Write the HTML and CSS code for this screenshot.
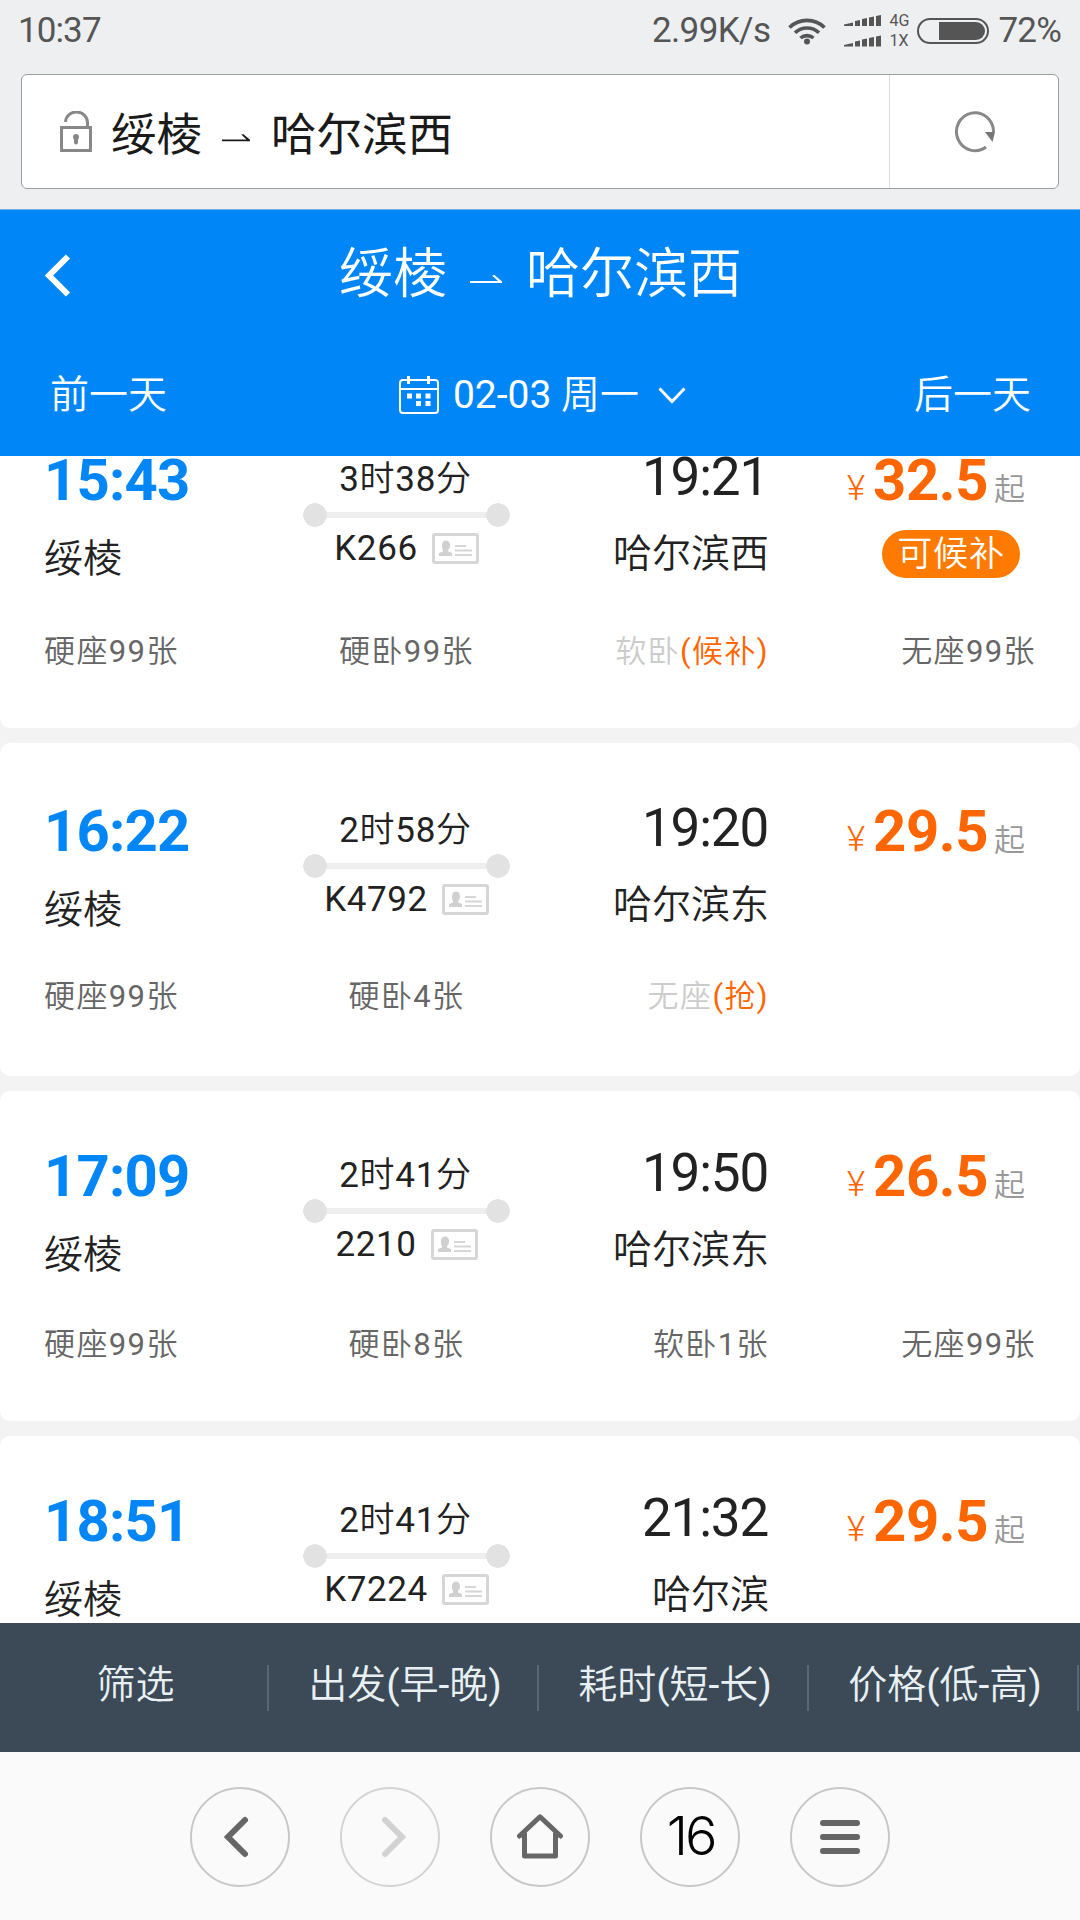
FILE: index.html
```
<!DOCTYPE html>
<html lang="zh-CN">
<head>
  <meta charset="UTF-8">
  <title>绥棱 ⇀ 哈尔滨西</title>
  <link rel="stylesheet" href="styles.css">
</head>
<body>
  <!-- shared icons -->
  <svg class="sprite">
    <symbol id="arrow" viewBox="0 0 32 10">
      <path d="M0 6h28L22 0.5L24.5 0L32 6.5V8H0z" fill="currentColor"/>
    </symbol>
    <symbol id="idcard" viewBox="0 0 47 31">
      <rect x="1.5" y="1.5" width="44" height="28" rx="1.5" fill="none" stroke="#d6d6d6" stroke-width="3"/>
      <path d="M10 12a4 4.5 0 0 1 8 0c0 3-1 4-2 5v1.500l4 1.500v3H7v-3l4-1.500V17c-.7-1-1-2-1-5z" fill="#d0d0d0"/>
      <path d="M23 13h11M23 17.500h17M23 22h17" stroke="#d6d6d6" stroke-width="2"/>
    </symbol>
  </svg>

  <div class="status">
    <span class="clock">10:37</span>
    <span class="speed">2.99K/s</span>
    <svg class="wifi" width="38" height="28" viewBox="0 0 38 28" fill="none" stroke="#555" stroke-width="3.600">
      <path d="M1.500 10.500a25 25 0 0 1 35 0M7 15.800a17.500 17.500 0 0 1 24 0M12.500 21a10 10 0 0 1 13 0"/>
      <circle cx="19" cy="24.500" r="3" fill="#555" stroke="none"/>
    </svg>
    <svg class="signal" width="37" height="32" viewBox="0 0 37 32" fill="#555">
      <path d="M0 11V9.500l9-2V11zM11 11V6l5-1v6zM18 11V4l5-1v8zM25 11V2.500l5-1V11zM32 11V1l5-1v11z"/>
      <path d="M0 31.500V30l9-2v3.500zM11 31.500v-5l5-1v6zM18 31.500v-7l5-1v8zM25 31.500V23l5-1v9.500zM32 31.500v-10l5-1v11z"/>
    </svg>
    <span class="net"><span>4G</span><span>1X</span></span>
    <svg class="battery" width="72" height="26" viewBox="0 0 72 26">
      <rect x="1" y="1" width="70" height="24" rx="12" fill="none" stroke="#555" stroke-width="2"/>
      <path d="M22 4h37a9 9 0 0 1 0 18H22z" fill="#555"/>
    </svg>
    <span class="percent">72%</span>
  </div>

  <div class="address">
    <div class="address-title">
      <svg width="32" height="41" viewBox="0 0 32 41" fill="none" stroke="#888" stroke-width="3">
        <rect x="1.500" y="16.500" width="29" height="23"/>
        <path d="M5.500 11a11 10.500 0 0 1 22 1v4"/>
        <path d="M16 27v4.500" stroke-width="4" stroke-linecap="round"/>
        <circle cx="16" cy="26" r="3" fill="#888" stroke="none"/>
      </svg>
      <span>绥棱</span>
      <svg class="arrow"><use href="#arrow"/></svg>
      <span>哈尔滨西</span>
    </div>
    <div class="reload">
      <svg width="42" height="42" viewBox="0 0 42 42">
        <path d="M32 36A18.500 19 0 1 1 39.500 21" fill="none" stroke="#888" stroke-width="3"/>
        <path d="M31 21h10l-2.500 10z" fill="#777"/>
      </svg>
    </div>
  </div>

  <div class="header">
    <div class="header-title">
      <svg class="back" width="26" height="43" viewBox="0 0 26 43" fill="none" stroke="#fff" stroke-width="6">
        <path d="M23 2.500L4 21.500L23 40.500"/>
      </svg>
      <span>绥棱</span>
      <svg class="arrow"><use href="#arrow"/></svg>
      <span>哈尔滨西</span>
    </div>
    <div class="dates">
      <span class="prev">前一天</span>
      <span class="today">
        <svg width="40" height="38" viewBox="0 0 40 38" fill="none" stroke="#fff" stroke-width="2">
          <rect x="1" y="4" width="38" height="33" rx="3"/>
          <path d="M1 13h38"/>
          <path d="M9.500 0v8M29.500 0v8" stroke-width="3"/>
          <path d="M8 20h5M17 20h5M26.500 20h5M17 27.500h5M26.500 27.500h5" stroke-width="5"/>
        </svg>
        <span>02-03 周一</span>
        <svg class="down" width="28" height="17" viewBox="0 0 28 17" fill="none" stroke="#fff" stroke-width="3">
          <path d="M1.500 1.500L14 14.500L26.500 1.500"/>
        </svg>
      </span>
      <span class="next">后一天</span>
    </div>
  </div>

  <div class="list">
    <div class="trip trip-first">
      <div class="trip-main">
        <div class="from"><b>15:43</b><span>绥棱</span></div>
        <div class="train">
          <span class="duration">3时38分</span>
          <div class="line"></div>
          <span class="number">K266 <svg class="idcard"><use href="#idcard"/></svg></span>
        </div>
        <div class="to"><b>19:21</b><span>哈尔滨西</span></div>
        <div class="price">
          <div><i>¥</i><b>32.5</b><small>起</small></div>
          <span class="badge">可候补</span>
        </div>
      </div>
      <div class="seats">
        <span>硬座99张</span>
        <span>硬卧99张</span>
        <span class="none">软卧<em>(候补)</em></span>
        <span>无座99张</span>
      </div>
    </div>

    <div class="trip trip-short">
      <div class="trip-main">
        <div class="from"><b>16:22</b><span>绥棱</span></div>
        <div class="train">
          <span class="duration">2时58分</span>
          <div class="line"></div>
          <span class="number">K4792 <svg class="idcard"><use href="#idcard"/></svg></span>
        </div>
        <div class="to"><b>19:20</b><span>哈尔滨东</span></div>
        <div class="price">
          <div><i>¥</i><b>29.5</b><small>起</small></div>
        </div>
      </div>
      <div class="seats">
        <span>硬座99张</span>
        <span>硬卧4张</span>
        <span class="none">无座<em>(抢)</em></span>
      </div>
    </div>

    <div class="trip">
      <div class="trip-main">
        <div class="from"><b>17:09</b><span>绥棱</span></div>
        <div class="train">
          <span class="duration">2时41分</span>
          <div class="line"></div>
          <span class="number">2210 <svg class="idcard"><use href="#idcard"/></svg></span>
        </div>
        <div class="to"><b>19:50</b><span>哈尔滨东</span></div>
        <div class="price">
          <div><i>¥</i><b>26.5</b><small>起</small></div>
        </div>
      </div>
      <div class="seats">
        <span>硬座99张</span>
        <span>硬卧8张</span>
        <span>软卧1张</span>
        <span>无座99张</span>
      </div>
    </div>

    <div class="trip">
      <div class="trip-main">
        <div class="from"><b>18:51</b><span>绥棱</span></div>
        <div class="train">
          <span class="duration">2时41分</span>
          <div class="line"></div>
          <span class="number">K7224 <svg class="idcard"><use href="#idcard"/></svg></span>
        </div>
        <div class="to"><b>21:32</b><span>哈尔滨</span></div>
        <div class="price">
          <div><i>¥</i><b>29.5</b><small>起</small></div>
        </div>
      </div>
    </div>
  </div>

  <div class="filters">
    <span>筛选</span>
    <span>出发(早-晚)</span>
    <span>耗时(短-长)</span>
    <span>价格(低-高)</span>
  </div>

  <div class="toolbar">
    <div class="tool">
      <svg width="40" height="44" viewBox="0 0 40 44" fill="none" stroke="#666" stroke-width="6" stroke-linecap="round">
        <path d="M25 5L8 22L25 39"/>
      </svg>
    </div>
    <div class="tool disabled">
      <svg width="40" height="44" viewBox="0 0 40 44" fill="none" stroke="#d2d2d2" stroke-width="6" stroke-linecap="round">
        <path d="M15 5L32 22L15 39"/>
      </svg>
    </div>
    <div class="tool">
      <svg width="48" height="46" viewBox="0 0 48 46" fill="none" stroke="#666" stroke-width="5" stroke-linecap="round" stroke-linejoin="round">
        <path d="M3.500 22L24 2.800L44.500 22M8.500 20v22h31V20"/>
      </svg>
    </div>
    <div class="tool count">16</div>
    <div class="tool">
      <svg width="40" height="34" viewBox="0 0 40 34" stroke="#666" stroke-width="6" stroke-linecap="round">
        <path d="M3 3h34M3 17h34M3 31h34"/>
      </svg>
    </div>
  </div>
</body>
</html>
```
FILE: styles.css
```
* {
  box-sizing: border-box;
}
body {
  margin: 0;
  width: 1080px;
  height: 1920px;
  overflow: hidden;
  display: flex;
  flex-direction: column;
  background: #eeeff1;
  color: #222;
  font-family: Roboto, "Noto Sans CJK SC DemiLight", "Noto Sans CJK SC", sans-serif;
}
svg {
  display: block;
  flex: none;
}
b, i, em {
  font-weight: normal;
  font-style: normal;
}
.sprite {
  display: none;
}

/* status bar */
.status {
  height: 74px;
  padding: 0 19px 13px 18px;
  display: flex;
  align-items: center;
  color: #555;
  font-size: 35px;
  line-height: 62px;
}
.clock {
  letter-spacing: -0.9px;
}
.speed {
  margin-left: auto;
  letter-spacing: -0.6px;
}
.wifi {
  margin-left: 18px;
}
.signal {
  margin-left: 18px;
}
.net {
  width: 25px;
  margin: 0 3px 0 8px;
  display: flex;
  flex-direction: column;
  font-size: 16px;
  line-height: 20px;
}
.percent {
  margin-left: 9px;
  letter-spacing: -0.8px;
}

/* address bar */
.address {
  height: 115px;
  margin: 0 21px 20px;
  display: flex;
  background: #fff;
  border: 1px solid #9c9fa0;
  border-radius: 6px;
}
.address-title {
  flex: 1;
  display: flex;
  align-items: center;
  padding-left: 38px;
  font-family: "Noto Sans CJK SC", sans-serif;
  font-size: 45.5px;
  line-height: 109px;
  color: #1a1a1a;
}
.address-title span {
  margin-left: 19px;
}
.address-title .arrow {
  width: 28px;
  height: 9px;
  margin: 14px 2px 0 20px;
}
.reload {
  width: 169px;
  padding-left: 2px;
  border-left: 1px solid #ddd;
  display: flex;
  align-items: center;
  justify-content: center;
}

/* blue header */
.header {
  height: 247px;
  border-top: 1px solid #6fb3e8;
  background: #0086f6;
  color: #fff;
}
.header-title {
  height: 125px;
  display: flex;
  align-items: center;
  font-size: 54px;
  line-height: 125px;
}
.header-title span {
  padding-top: 3px;
}
.header-title .back {
  margin: 6px 268px 0 45px;
}
.header-title .arrow {
  width: 32px;
  height: 10px;
  margin: 14px 24px 0 23px;
}
.dates {
  height: 120px;
  padding: 0 49px 0 50px;
  display: flex;
  align-items: center;
  justify-content: space-between;
  font-size: 39px;
  line-height: 120px;
}
.today {
  display: flex;
  align-items: center;
  padding-left: 4px;
}
.today svg {
  margin-right: 14px;
}
.today .down {
  margin: 0 0 0 19px;
}

/* train list */
.list {
  height: 1167px;
  overflow: hidden;
  background: #f3f3f3;
}
.trip {
  height: 330px;
  margin-bottom: 15px;
  padding: 45px 44px 0;
  background: #fff;
  border-radius: 10px;
}
.trip-first {
  height: 336px;
  margin-top: -64px;
  padding-top: 48px;
}
.trip-short {
  height: 333px;
  padding-top: 48px;
}
.trip-main,
.seats {
  display: grid;
  grid-template-columns: 259px 207px 259px 267px;
}
.trip-main {
  height: 189px;
}
.trip-first .trip-main {
  height: 192px;
}
.trip-short .trip-main {
  height: 186px;
}
.from,
.to,
.train {
  display: flex;
  flex-direction: column;
}
.from b {
  font-size: 58px;
  font-weight: bold;
  line-height: 80px;
  letter-spacing: -0.8px;
  color: #0086f6;
}
.from span {
  font-size: 39px;
  line-height: 78px;
}
.train {
  align-items: center;
  padding-top: 15px;
  font-size: 35px;
}
.duration {
  padding-top: 1px;
  margin: 0 2px -1px 0;
  line-height: 48px;
  letter-spacing: 0.7px;
}
.line {
  width: 100%;
  height: 24px;
  background:
    radial-gradient(circle at 12px 12px, #e2e2e2 11.5px, transparent 12px),
    radial-gradient(circle at 195px 12px, #e2e2e2 11.5px, transparent 12px),
    linear-gradient(#eee, #eee) center / 183px 6px no-repeat;
}
.number {
  display: flex;
  align-items: center;
  gap: 14px;
  line-height: 43px;
  letter-spacing: 0.6px;
}
.idcard {
  width: 47px;
  height: 31px;
}
.to {
  align-items: flex-end;
}
.to b {
  margin-right: 1px;
  font-size: 53px;
  line-height: 74px;
  letter-spacing: -1.2px;
}
.to span {
  font-size: 39px;
  line-height: 80px;
}
.price {
  padding-left: 77px;
}
.price div {
  height: 80px;
  display: flex;
  align-items: baseline;
  line-height: 80px;
  color: #ff6600;
}
.price i {
  width: 27px;
  padding-left: 1px;
  font-size: 35px;
  font-weight: 300;
}
.price b {
  font-size: 58px;
  font-weight: bold;
  letter-spacing: -0.4px;
}
.price small {
  margin-left: 6px;
  font-size: 31px;
  color: #999;
}
.badge {
  display: block;
  width: 138px;
  height: 48px;
  margin: 10px 0 0 36px;
  border-radius: 24px;
  background: #ff7a00;
  color: #fff;
  font-size: 35px;
  line-height: 50px;
  letter-spacing: 0.8px;
  text-align: center;
}
.seats {
  color: #666;
  font-size: 31px;
  line-height: 40px;
  letter-spacing: 1.4px;
}
.seats span:nth-child(2) {
  text-align: center;
}
.seats span:nth-child(n+3) {
  text-align: right;
}
.seats .none {
  color: #ccc;
}
.seats em {
  color: #ff6600;
}

/* sort bar */
.filters {
  height: 129px;
  display: flex;
  align-items: center;
  background: #3b4a56;
  color: #e8f0f4;
  font-size: 39px;
}
.filters span {
  width: 270px;
  height: 46px;
  padding-left: 4px;
  line-height: 40px;
  border-right: 2px solid #5a6771;
  text-align: center;
}
.filters span:first-child {
  width: 269px;
}

/* browser toolbar */
.toolbar {
  height: 168px;
  padding-top: 1px;
  display: flex;
  align-items: center;
  justify-content: center;
  gap: 50px;
  background: #fafafa;
}
.tool {
  width: 100px;
  height: 100px;
  display: flex;
  align-items: center;
  justify-content: center;
  border: 2px solid #c8c8c8;
  border-radius: 50%;
}
.disabled {
  border-color: #d4d4d4;
}
.count {
  padding: 0 0 3px 1px;
  color: #000;
  font-family: Inter, sans-serif;
  font-size: 54px;
  font-weight: 300;
  letter-spacing: -3px;
}
```
